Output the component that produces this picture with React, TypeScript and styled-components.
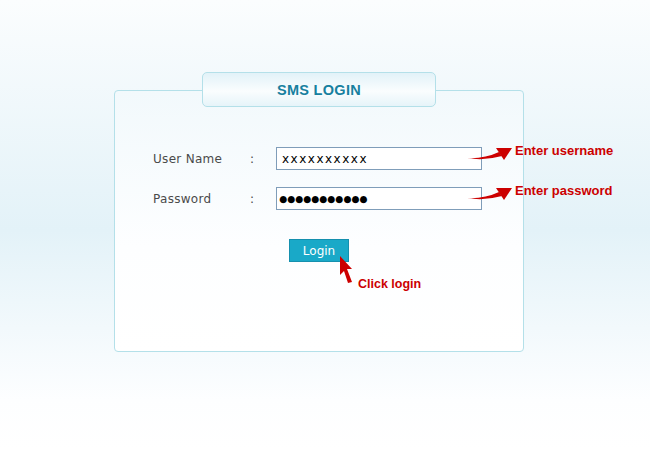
import styled, { createGlobalStyle } from 'styled-components'

const GlobalStyle = createGlobalStyle`
  html, body {
    margin: 0;
    padding: 0;
  }
  body {
    height: 450px;
    background: linear-gradient(#fbfdfe 0px, #e3f2f8 230px, #fdfeff 400px, #ffffff 450px);
    font-family: "DejaVu Sans", Verdana, sans-serif;
  }
`;

const Page = styled.div`
  height: 450px;
  padding: 90px 0 0 114px;
  box-sizing: border-box;
`;

const Panel = styled.div`
  position: relative;
  width: 410px;
  height: 262px;
  box-sizing: border-box;
  border: 1px solid #b4e0e9;
  border-radius: 4px;
  background: linear-gradient(#f2f9fc, #fdfeff 60%, #ffffff);
  padding: 56px 0 0 38px;
`;

const TitleTab = styled.div`
  position: absolute;
  top: -19px;
  left: 87px;
  width: 234px;
  height: 35px;
  box-sizing: border-box;
  border: 1px solid #b4e0e9;
  border-radius: 5px;
  background: linear-gradient(#e2f2f8, #fafdfe 55%, #e6f4f9);
  display: flex;
  align-items: center;
  justify-content: center;
  font-family: "Liberation Sans", Arial, sans-serif;
  font-weight: bold;
  font-size: 14.5px;
  letter-spacing: 0.3px;
  color: #17809f;
`;

const Form = styled.form`
  display: flex;
  flex-direction: column;
  gap: 17px;
`;

const Row = styled.div`
  display: grid;
  grid-template-columns: 97px 26px 206px auto;
  align-items: center;
  height: 23px;
`;

const Label = styled.label`
  font-size: 12px;
  color: #4a4a4a;
  letter-spacing: 0.3px;
`;

const Colon = styled.span`
  font-size: 12px;
  color: #4a4a4a;
`;

const TextInput = styled.input<{ $masked?: boolean }>`
  width: 206px;
  height: 23px;
  box-sizing: border-box;
  border: 1px solid #7f9db9;
  background: #fff;
  padding: 0 0 0 ${(p) => (p.$masked ? '2px' : '5px')};
  margin: 0;
  outline: none;
  font-family: "DejaVu Sans", Verdana, sans-serif;
  font-size: ${(p) => (p.$masked ? '9.2px' : '12px')};
  letter-spacing: ${(p) => (p.$masked ? '0px' : '1.5px')};
  color: #000;
`;

const Hint = styled.div`
  display: flex;
  align-items: flex-start;
  margin: -12px 0 0 -16px;
  gap: 3px;
  white-space: nowrap;
`;

const HintText = styled.span<{ $size?: number; $drop?: number }>`
  font-family: "Liberation Sans", Arial, sans-serif;
  font-weight: bold;
  font-size: ${(p) => p.$size ?? 13}px;
  color: #cc0000;
  line-height: 14px;
  margin-bottom: ${(p) => -(p.$drop ?? 0)}px;
`;

const ButtonRow = styled.div`
  margin: 12px 0 0 136px;
  position: relative;
  width: 60px;
`;

const LoginButton = styled.button`
  width: 60px;
  height: 23px;
  box-sizing: border-box;
  border: 1px solid #1590ae;
  background: #19a9c8;
  color: #fff;
  font-family: "DejaVu Sans", Verdana, sans-serif;
  font-size: 12px;
  padding: 0;
  cursor: pointer;
`;

const ClickHint = styled.div`
  position: absolute;
  left: 49px;
  top: 16px;
  display: flex;
  align-items: flex-end;
  gap: 4px;
  white-space: nowrap;
`;

const CurveArrow = () => (
  <svg width="46" height="18" viewBox="0 0 46 18">
    <path d="M1 14 Q18 15 33 8 L36 12 Q18 17 1 14 Z" fill="#cc0000" />
    <path d="M30 4 L46 4 L38 16 Z" fill="#cc0000" />
  </svg>
);

const Pointer = () => (
  <svg width="16" height="29" viewBox="0 0 16 29">
    <path d="M2 1 L14 14 L9 14 L14 27 L10 28 L6 16 L2 20 Z" fill="#cc0000" />
  </svg>
);

export default function App() {
  return (
    <>
      <GlobalStyle />
      <Page>
        <Panel>
          <TitleTab>SMS LOGIN</TitleTab>
          <Form onSubmit={(e) => e.preventDefault()}>
            <Row>
              <Label htmlFor="username">User Name</Label>
              <Colon>:</Colon>
              <TextInput id="username" type="text" defaultValue="xxxxxxxxxx" />
              <Hint>
                <CurveArrow />
                <HintText>Enter username</HintText>
              </Hint>
            </Row>
            <Row>
              <Label htmlFor="password">Password</Label>
              <Colon>:</Colon>
              <TextInput id="password" type="text" $masked defaultValue="●●●●●●●●●●●" />
              <Hint>
                <CurveArrow />
                <HintText>Enter password</HintText>
              </Hint>
            </Row>
            <ButtonRow>
              <LoginButton type="submit">Login</LoginButton>
              <ClickHint>
                <Pointer />
                <HintText $size={12.5} $drop={7}>Click login</HintText>
              </ClickHint>
            </ButtonRow>
          </Form>
        </Panel>
      </Page>
    </>
  )
}
